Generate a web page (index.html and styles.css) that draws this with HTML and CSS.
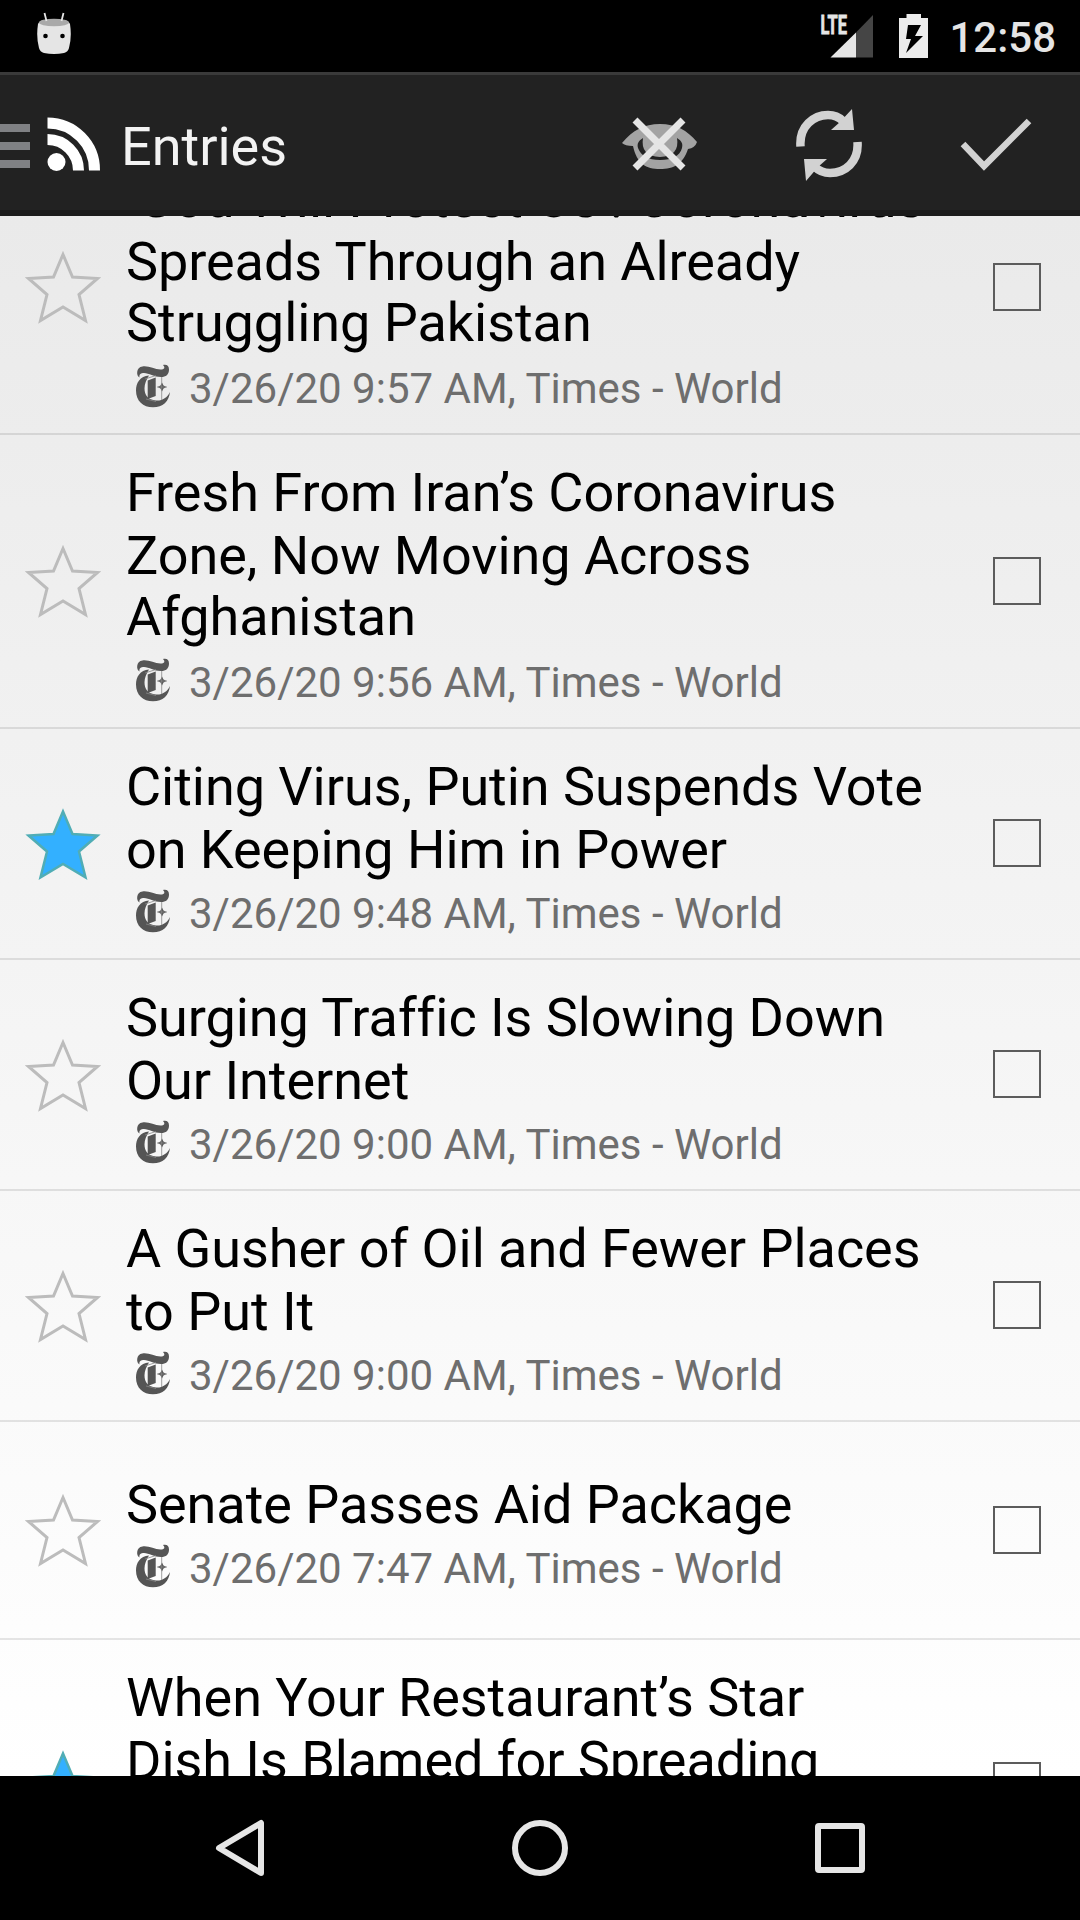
FILE: index.html
```
<!DOCTYPE html>
<html lang="en">
<head>
<meta charset="utf-8">
<title>Entries</title>
<link rel="stylesheet" href="styles.css">
</head>
<body>
<svg class="defs" aria-hidden="true">
  <symbol id="star" viewBox="0 0 80 80"><path d="M40 7.500 L49.500 30 L74.500 31.500 L56 47.500 L62.500 73.500 L40 60 L17.500 73.500 L24 47.500 L5.500 31.500 L30.500 30 Z"/></symbol>
  <symbol id="feed" viewBox="0 0 36 44">
    <path fill="#555" d="M4.500 13.500C1 12 1 3 7.500 2.500c6-1 12 3 18 3 4 0 5-2 2.500-4.500 4-1 6 1 6 4.500 0 5-3 7.500-8 7.500-7 0-12-4-17-4-3 0-5 1-4.500 4.500z"/>
    <path fill="#555" d="M14 11.500C5 12 1 19 1 26.500 1 37 8 43.300 18 43.300c10 0 16-6 17-15.300-3 6-8 9-14 8.500C13 36 9.500 31 9.500 24.500c0-5 2-9 4.500-13z"/>
    <path fill="#555" d="M12.700 16.500l8-3v18.500l-8 3zM27 18.500l1.500 3 3 1.500-3 1.500-1.500 3-1.500-3-3-1.500 3-1.500z"/>
    <path fill="none" stroke="#888" stroke-width=".8" d="M26.700 13v23M10 15l11-3.500M11 35l10 2.500M22 23h10"/>
  </symbol>
</svg>
<div class="screen">
  <header class="status">
    <svg class="droid" width="36" height="42" viewBox="0 0 36 42"><path d="M2 12q1-3 6-4h20q5 1 6 4 2 13-1 24-1 4-5 5-10 2-20 0-4-1-5-5Q0 25 2 12z" fill="#e5e5e5"/><ellipse cx="18" cy="10.500" rx="15" ry="3.800" fill="#a9a9a9"/><path d="M8.500 1l2 8M27.500 1l-2 8" stroke="#e5e5e5" stroke-width="1.800"/><circle cx="9.500" cy="24" r="2.300"/><circle cx="26.500" cy="24" r="2.300"/></svg>
    <svg class="signal" width="54" height="44" viewBox="0 0 54 44"><path d="M53 0v42.500H36V17.500z" fill="#454545"/><path d="M36 17.500v25H10.500z" fill="#e5e5e5"/><text x="0.500" y="19" textLength="26.500" lengthAdjust="spacingAndGlyphs" font-size="25.500" font-weight="700" fill="#e5e5e5" stroke="#e5e5e5" stroke-width=".8">LTE</text></svg>
    <svg class="battery" width="30" height="44" viewBox="0 0 30 44"><path fill="#ececec" fill-rule="evenodd" d="M7.500 0h14.500v4h7v40H0V4h7.500zM9 11L7 25h5L7 39 24 22h-8l6-11z"/></svg>
    <span class="clock">12:58</span>
  </header>
  <nav class="bar">
    <svg width="30" height="44" viewBox="0 0 30 44"><path d="M0 0h30v8H0zM0 18h30v8H0zM0 36h30v8H0z" fill="#808184"/></svg>
    <svg class="rss" width="54" height="54" viewBox="0 0 54 54"><circle cx="9.500" cy="45" r="9" fill="#fff"/><path d="M.500 22.500A31 31 0 0 1 31.500 53.500M.500 6A47 47 0 0 1 47.500 53.500" fill="none" stroke="#fff" stroke-width="11"/></svg>
    <h1>Entries</h1>
    <div class="actions">
      <svg width="76" height="56" viewBox="0 0 76 56"><path fill="#a3a3a3" fill-rule="evenodd" d="M0 26C11 13 22 7 38 7s27 6 37 18q-2 6-9 7C61 47 52 52 38 52S15 47 11 29Q3 29 0 26zM21 21C16 24 15 27 16 31c3 8 10 12 22 12s20-4 22-12c1-4 0-7-5-10q3 18-17 19-20-1-17-19z"/><path d="M13 3l48 48M61 3L13 51" stroke="#e5e5e5" stroke-width="7"/></svg>
      <svg width="66" height="74" viewBox="0 0 66 74"><path d="M4.500 38.500C3 18 18 7 32 7q9 0 15 6M61.500 34C63 54 49 65 34 65q-9 0-15-6" fill="none" stroke="#d2d2d2" stroke-width="8.500"/><path d="M56 1l2 21H35l9-8zM10 73L8 51h23l-9 8z" fill="#d2d2d2"/></svg>
      <svg width="72" height="56" viewBox="0 0 72 56"><path d="M3 27l21 22L69 4" fill="none" stroke="#d2d2d2" stroke-width="6.500"/></svg>
    </div>
  </nav>
  <main class="list">
    <article class="row tall"><svg class="star"><use href="#star"/></svg><div class="body"><h2><span>‘God Will Protect Us’: Coronavirus</span><span>Spreads Through an Already</span><span>Struggling Pakistan</span></h2><p><svg class="feed"><use href="#feed"/></svg>3/26/20 9:57 AM, Times - World</p></div><i class="check"></i></article>
    <article class="row tall"><svg class="star"><use href="#star"/></svg><div class="body"><h2><span>Fresh From Iran’s Coronavirus</span><span>Zone, Now Moving Across</span><span>Afghanistan</span></h2><p><svg class="feed"><use href="#feed"/></svg>3/26/20 9:56 AM, Times - World</p></div><i class="check"></i></article>
    <article class="row"><svg class="star on"><use href="#star"/></svg><div class="body"><h2><span>Citing Virus, Putin Suspends Vote</span><span>on Keeping Him in Power</span></h2><p><svg class="feed"><use href="#feed"/></svg>3/26/20 9:48 AM, Times - World</p></div><i class="check"></i></article>
    <article class="row"><svg class="star"><use href="#star"/></svg><div class="body"><h2><span>Surging Traffic Is Slowing Down</span><span>Our Internet</span></h2><p><svg class="feed"><use href="#feed"/></svg>3/26/20 9:00 AM, Times - World</p></div><i class="check"></i></article>
    <article class="row"><svg class="star"><use href="#star"/></svg><div class="body"><h2><span>A Gusher of Oil and Fewer Places</span><span>to Put It</span></h2><p><svg class="feed"><use href="#feed"/></svg>3/26/20 9:00 AM, Times - World</p></div><i class="check"></i></article>
    <article class="row short"><svg class="star"><use href="#star"/></svg><div class="body"><h2><span>Senate Passes Aid Package</span></h2><p><svg class="feed"><use href="#feed"/></svg>3/26/20 7:47 AM, Times - World</p></div><i class="check"></i></article>
    <article class="row tall"><svg class="star on"><use href="#star"/></svg><div class="body"><h2><span>When Your Restaurant’s Star</span><span>Dish Is Blamed for Spreading</span></h2></div><i class="check"></i></article>
  </main>
  <footer class="keys">
    <svg width="60" height="60" viewBox="0 0 60 60"><path d="M51 5v50L9 30z"/></svg>
    <svg width="60" height="60" viewBox="0 0 60 60"><circle cx="30" cy="30" r="25"/></svg>
    <svg width="60" height="60" viewBox="0 0 60 60"><rect x="8" y="8" width="44" height="44" rx="1"/></svg>
  </footer>
</div>
</body>
</html>
```
FILE: styles.css
```
* { box-sizing: border-box; margin: 0; padding: 0; }
body { font-family: Roboto, sans-serif; background: #000; }
svg { display: block; flex: none; }
.defs { width: 0; height: 0; position: absolute; }
.screen { width: 1080px; height: 1920px; display: flex; flex-direction: column; overflow: hidden; }
.status { height: 72px; flex: none; display: flex; align-items: flex-start; padding: 0 24px 0 36px; color: #e5e5e5; }
.droid { margin-top: 12px; }
.signal { margin: 15px 0 0 auto; overflow: visible; }
.battery { margin: 14px 0 0 25px; }
.clock { font-size: 42px; font-weight: 500; line-height: 50px; margin: 13px 0 0 20px; }
.bar { height: 144px; flex: none; display: flex; align-items: center; background: #222; border-top: 3px solid #3a3a3a; border-bottom: 6px solid #1b1b1b; padding: 7px 48px 0 0; }
.rss { margin: 0 0 4px 17px; }
.bar h1 { font-size: 54px; font-weight: 400; line-height: 64px; color: #f3f3f3; margin: 2px 0 0 20px; }
.actions { margin: 0 0 3px auto; display: flex; align-items: center; gap: 98px; }
.list { flex: 1; min-height: 0; overflow: hidden; background: linear-gradient(#eaeaea, #fff); display: flex; flex-direction: column; }
.row { height: 231px; flex: none; display: flex; align-items: center; border-bottom: 2px solid #00000019; padding: 0 39px 0 23px; }
.row.tall { height: 294px; }
.row.short { height: 218px; }
.row.tall:first-child { margin-top: -75px; }
.star { width: 80px; height: 80px; fill: none; stroke: #bcbcbc; stroke-width: 3px; }
.star.on { fill: #33b0ff; stroke: #50adb5; stroke-width: 2.5px; }
.body { flex: 1; align-self: flex-start; margin-left: 23px; padding-top: 26px; }
.short .body { padding-top: 51px; }
h2 { font-size: 54px; font-weight: 400; color: #000; letter-spacing: -0.05px; }
h2 span { display: block; height: 63px; line-height: 63px; white-space: nowrap; }
.tall h2 span:nth-child(3) { margin-top: -2px; }
.body p { display: flex; align-items: center; height: 50px; margin-top: 7px; padding-left: 9px; font-size: 42px; color: #6e6e6e; white-space: nowrap; }
.tall .body p { margin-top: 9px; }
.feed { width: 36px; height: 44px; margin: 0 18px 4px 0; }
.check { width: 48px; height: 48px; flex: none; margin-bottom: 1px; border: 2px solid #5c5c5c; }
.keys { height: 144px; flex: none; display: flex; justify-content: center; align-items: center; gap: 240px; }
.keys svg { fill: none; stroke: #e6e6e6; stroke-width: 6px; stroke-linejoin: round; }
```
